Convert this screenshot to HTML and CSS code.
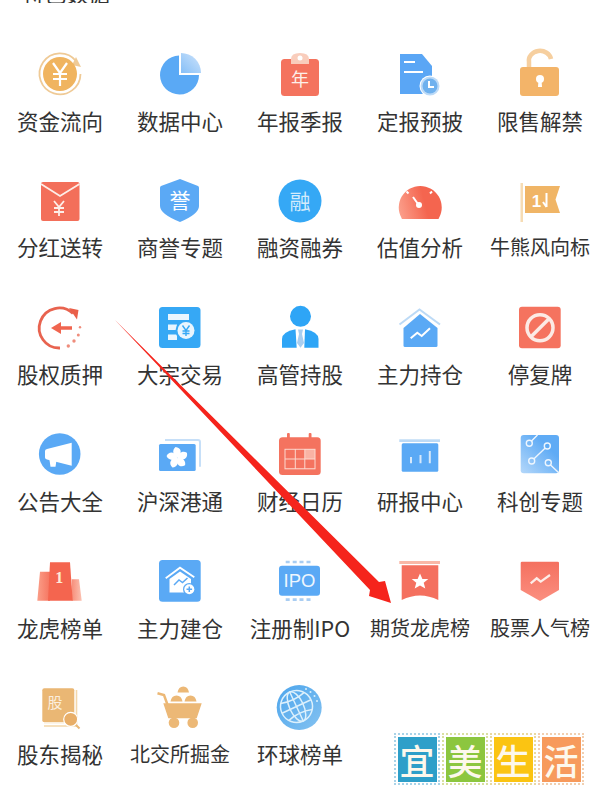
FILE: index.html
```html
<!DOCTYPE html>
<html lang="zh-CN">
<head>
<meta charset="utf-8">
<title>数据中心</title>
<link rel="stylesheet" href="styles.css">
</head>
<body>
<main class="page">
  <div class="title"><span>特色数据</span></div>
  <div class="grid">

    <a class="item"><svg class="icon" viewBox="0 0 64 64">
      <path d="M48 19A20.5 20.5 0 1 0 52.5 32" fill="none" stroke="#efca96" stroke-width="1.8"/>
      <path d="M48 15L53 25L44 23Z" fill="#efca96"/>
      <circle cx="32" cy="32" r="17" fill="#f0b45f"/>
      <path d="M25 21L32 31L39 21M32 31V44M25 32H39M25 37H39" fill="none" stroke="#fff" stroke-width="2.2"/>
    </svg><span class="label">资金流向</span></a>

    <a class="item"><svg class="icon" viewBox="0 0 64 64">
      <defs><linearGradient id="g-pie" x1="0" y1="1" x2="1" y2="0"><stop offset="0" stop-color="#86bff7"/><stop offset="1" stop-color="#cfe4fb"/></linearGradient></defs>
      <path d="M31 13.500A19.500 19.500 0 1 0 51 33H31Z" fill="#5aa9f5"/>
      <path d="M33 11A20 20 0 0 1 53 31H33Z" fill="url(#g-pie)"/>
    </svg><span class="label">数据中心</span></a>

    <a class="item"><svg class="icon" viewBox="0 0 64 64">
      <rect x="13" y="17" width="38" height="37" rx="3.500" fill="#f4735e"/>
      <path d="M23 22V17Q23 11 32 11Q41 11 41 17V22Z" fill="#f9cdbc"/>
      <circle cx="32" cy="16" r="2.500" fill="#fff"/>
      <text class="glyph" x="32" y="44" font-size="18" fill="#fdf0ea" text-anchor="middle">年</text>
    </svg><span class="label">年报季报</span></a>

    <a class="item"><svg class="icon" viewBox="0 0 64 64">
      <path d="M12 12H34L44 24V52H12Z" fill="#5aa6f5"/>
      <path d="M16 20H27M16 30H35" stroke="#fff" stroke-width="2" fill="none"/>
      <circle cx="42" cy="44" r="10.500" fill="#fff"/>
      <circle cx="42" cy="44" r="9.500" fill="#bcdaf7"/>
      <circle cx="42" cy="44" r="7.500" fill="#6fb1ee"/>
      <path d="M41 39V45H46" stroke="#fff" stroke-width="2" fill="none"/>
    </svg><span class="label">定报预披</span></a>

    <a class="item"><svg class="icon" viewBox="0 0 64 64">
      <path d="M21 25V20A11 9.500 0 0 1 43 17" fill="none" stroke="#f6cf9f" stroke-width="4.500"/>
      <rect x="12" y="25" width="39" height="29" rx="3" fill="#f3b469"/>
      <circle cx="32" cy="37" r="4" fill="#fff"/>
      <path d="M30.500 38H33.500L34 45H30Z" fill="#fff"/>
    </svg><span class="label">限售解禁</span></a>

    <a class="item"><svg class="icon" viewBox="0 0 64 64">
      <rect x="13" y="13" width="38.500" height="39" rx="2" fill="#f36f5a"/>
      <path d="M13 15L32 27L51.500 15" fill="none" stroke="#fdeee8" stroke-width="1.800"/>
      <path d="M26 32L31 38L36 32M31 38V47M26 39H36M26 43H36" fill="none" stroke="#fdeee8" stroke-width="1.800"/>
    </svg><span class="label">分红送转</span></a>

    <a class="item"><svg class="icon" viewBox="0 0 64 64">
      <path d="M32 10L50 17Q51 17.500 51 19V37Q51 45 32 53Q12 45 12 37V19Q12 17.500 13 17Z" fill="#5ba9f5"/>
      <text class="glyph" x="32" y="39" font-size="21" fill="#fff" text-anchor="middle">誉</text>
    </svg><span class="label">商誉专题</span></a>

    <a class="item"><svg class="icon" viewBox="0 0 64 64">
      <circle cx="32" cy="32" r="21.500" fill="#35a8f5"/>
      <text class="glyph" x="32" y="39.500" font-size="21" fill="#d3ebfc" text-anchor="middle">融</text>
    </svg><span class="label">融资融券</span></a>

    <a class="item"><svg class="icon" viewBox="0 0 64 64">
      <defs><linearGradient id="g-gauge" x1="0" y1="0.600" x2="1" y2="0.400"><stop offset="0" stop-color="#fb9c88"/><stop offset="0.600" stop-color="#f4654f"/></linearGradient></defs>
      <path d="M13.500 49A21.500 21.500 0 1 1 51 49Q51 50 50 50H14.500Q13.500 50 13.500 49Z" fill="url(#g-gauge)"/>
      <path d="M18.500 22.500L20.500 24.500M44 22.500L42 24.500M25 28L30 35" stroke="#fff" stroke-width="2" fill="none"/>
      <circle cx="31" cy="36" r="3" fill="#fff"/>
    </svg><span class="label">估值分析</span></a>

    <a class="item"><svg class="icon" viewBox="0 0 64 64">
      <rect x="12.500" y="14" width="2.500" height="39" fill="#f6dcb4"/>
      <path d="M17 17H52L47.500 30.500L52 44H17Z" fill="#f0b566"/>
      <text class="latin" x="28.500" y="38" font-size="17" font-weight="700" fill="#fff" text-anchor="middle">1</text>
      <path d="M38.500 24V38M38.500 38L35 33" stroke="#fff" stroke-width="2" fill="none"/>
    </svg><span class="label label-long">牛熊风向标</span></a>

    <a class="item"><svg class="icon" viewBox="0 0 64 64">
      <path d="M45 17.500A20 20 0 1 0 32 52" fill="none" stroke="#e8634f" stroke-width="2.800"/>
      <path d="M41 12L50.500 14L49 23.500Z" fill="#ea5f49"/>
      <circle cx="40.300" cy="50" r="1.700" fill="#ef8d7c"/><circle cx="46" cy="45" r="1.700" fill="#ef8d7c"/>
      <circle cx="50.300" cy="39" r="1.500" fill="#ef8d7c"/><circle cx="52" cy="31.300" r="1.200" fill="#ef8d7c"/>
      <path d="M32 32H44" stroke="#f0654f" stroke-width="3.500"/>
      <path d="M23 32L33 26V38Z" fill="#f0654f"/>
    </svg><span class="label">股权质押</span></a>

    <a class="item"><svg class="icon" viewBox="0 0 64 64">
      <rect x="11" y="11" width="41.500" height="41" rx="3.500" fill="#36a8f5"/>
      <path d="M20 18H41V24H20ZM20 28.500H29V34H20ZM20 38.500H29V44H20Z" fill="#e9f5fe"/>
      <circle cx="38" cy="34.500" r="10.500" fill="#36a8f5"/>
      <circle cx="38" cy="34.500" r="8.500" fill="#e9f5fe"/>
      <path d="M34.500 29.500L38 34.500L41.500 29.500M38 34.500V40M34.500 35H41.500M34.500 37.500H41.500" fill="none" stroke="#36a8f5" stroke-width="1.400"/>
    </svg><span class="label">大宗交易</span></a>

    <a class="item"><svg class="icon" viewBox="0 0 64 64">
      <circle cx="32.500" cy="20.300" r="10.500" fill="#2ea5f6"/>
      <path d="M14 51.700V43Q14 36 27.500 33.300L28.700 51.700Z" fill="#2ea5f6"/>
      <path d="M50.500 51.700V43Q50.500 36 37 33.300L36.300 51.700Z" fill="#2ea5f6"/>
      <path d="M30 33.500H35L34 38L36 47L32.500 51.700L29 47L31 38Z" fill="#a9cef0"/>
    </svg><span class="label">高管持股</span></a>

    <a class="item"><svg class="icon" viewBox="0 0 64 64">
      <path d="M11.500 28.500L31.500 13.500L52 28.500" fill="none" stroke="#bcdaf6" stroke-width="2"/>
      <path d="M32 18L49.500 32V49.500Q49.500 51 48 51H17Q15.500 51 15.500 49.500V32Z" fill="#5aa9f5"/>
      <path d="M22.700 42.300L29.300 36.700L33.700 40L42 32.300" fill="none" stroke="#fff" stroke-width="2"/>
    </svg><span class="label">主力持仓</span></a>

    <a class="item"><svg class="icon" viewBox="0 0 64 64">
      <rect x="11" y="10.700" width="41.700" height="41.600" rx="3" fill="#f5735f"/>
      <circle cx="32" cy="31.700" r="13" fill="none" stroke="#fcebe5" stroke-width="3.500"/>
      <path d="M22.500 41.200L41.500 22.200" stroke="#fcebe5" stroke-width="3.500"/>
    </svg><span class="label">停复牌</span></a>

    <a class="item"><svg class="icon" viewBox="0 0 64 64">
      <circle cx="31.700" cy="32" r="20.800" fill="#5aa9f5"/>
      <path d="M17 29Q17 27.500 19 27L43.700 20.700V43.700L19 37.500Q17 37 17 35.500Z" fill="#fff"/>
      <path d="M21.500 38H28.500L27.500 44.700H22.500Z" fill="#fff"/>
    </svg><span class="label">公告大全</span></a>

    <a class="item"><svg class="icon" viewBox="0 0 64 64">
      <path d="M17 18H50Q52 18 52 20V44.700" fill="none" stroke="#c6dff8" stroke-width="2"/>
      <rect x="11" y="22" width="36.700" height="27" rx="1.500" fill="#5aa9f5"/>
      <g fill="#fff">
        <path d="M29.300 35.700C24.500 33 24 28 27.500 25C33 25.500 35 31 29.300 35.700Z"/>
        <path d="M29.300 35.700C24.500 33 24 28 27.500 25C33 25.500 35 31 29.300 35.700Z" transform="rotate(72 29.300 35.700)"/>
        <path d="M29.300 35.700C24.500 33 24 28 27.500 25C33 25.500 35 31 29.300 35.700Z" transform="rotate(144 29.300 35.700)"/>
        <path d="M29.300 35.700C24.500 33 24 28 27.500 25C33 25.500 35 31 29.300 35.700Z" transform="rotate(216 29.300 35.700)"/>
        <path d="M29.300 35.700C24.500 33 24 28 27.500 25C33 25.500 35 31 29.300 35.700Z" transform="rotate(288 29.300 35.700)"/>
      </g>
    </svg><span class="label">沪深港通</span></a>

    <a class="item"><svg class="icon" viewBox="0 0 64 64">
      <rect x="19" y="11" width="2.800" height="7" rx="1" fill="#f4735f"/><rect x="40.700" y="11" width="2.800" height="7" rx="1" fill="#f4735f"/>
      <rect x="11" y="15.300" width="41.700" height="37.700" rx="3.500" fill="#f4735f"/>
      <rect x="16.500" y="26.800" width="31" height="20.500" fill="#fcd9cf"/>
      <path d="M17.500 27.800H26.800V36.500H17.500ZM27.800 27.800H36.300V36.500H27.800ZM17.500 37.500H26.800V46.300H17.500ZM27.800 37.500H36.300V46.300H27.800ZM37.300 37.500H46.500V46.300H37.300Z" fill="#f4735f"/>
      <rect x="37.300" y="27.800" width="9.200" height="8.700" fill="#f9b3a4"/>
    </svg><span class="label">财经日历</span></a>

    <a class="item"><svg class="icon" viewBox="0 0 64 64">
      <rect x="11.300" y="17.300" width="40.700" height="2.700" fill="#bcdaf6"/>
      <rect x="13.700" y="21.300" width="36.600" height="28.400" rx="1.500" fill="#5aa9f5"/>
      <path d="M23 35V41.300M32.500 33V41.300M41.800 29V41.300" stroke="#d5e8fb" stroke-width="2" fill="none"/>
    </svg><span class="label">研报中心</span></a>

    <a class="item"><svg class="icon" viewBox="0 0 64 64">
      <defs><linearGradient id="g-sci" x1="0" y1="1" x2="1" y2="0"><stop offset="0" stop-color="#b5d8fa"/><stop offset="0.700" stop-color="#5fabf5"/></linearGradient></defs>
      <rect x="12.700" y="13" width="38.300" height="38.300" rx="3" fill="url(#g-sci)"/>
      <g fill="none" stroke="#eef6fe" stroke-width="1.400">
        <circle cx="21.300" cy="21.300" r="3"/><circle cx="39.300" cy="24" r="3"/><circle cx="23.700" cy="39" r="3"/><circle cx="40.300" cy="40.700" r="3"/>
        <path d="M23.500 19L29.500 13M37 26.200L26 36.800M42.500 43L51 51"/>
      </g>
    </svg><span class="label">科创专题</span></a>

    <a class="item"><svg class="icon" viewBox="0 0 64 64">
      <defs>
        <linearGradient id="g-podl" x1="0" y1="0" x2="1" y2="0"><stop offset="0" stop-color="#fb9e88"/><stop offset="1" stop-color="#f57560"/></linearGradient>
        <linearGradient id="g-podr" x1="0" y1="0" x2="1" y2="0"><stop offset="0" stop-color="#f78e7a"/><stop offset="1" stop-color="#fbc2b2"/></linearGradient>
      </defs>
      <path d="M12 22.700H22V51.700H9.300Z" fill="url(#g-podl)"/>
      <path d="M43.700 30.300H51L53.700 51.700H43.700Z" fill="url(#g-podr)"/>
      <path d="M22 13.300H42L44.700 51.700H20Z" fill="#f4654f"/>
      <text class="serif" x="31.300" y="34" font-size="16" font-weight="700" fill="#fdebd8" text-anchor="middle">1</text>
    </svg><span class="label">龙虎榜单</span></a>

    <a class="item"><svg class="icon" viewBox="0 0 64 64">
      <rect x="11" y="11" width="41.700" height="41.700" rx="3.500" fill="#5aa9f5"/>
      <path d="M17.700 29.300L32 18.700L46.300 28.300" fill="none" stroke="#fff" stroke-width="1.800"/>
      <path d="M32 22.500L43 30V43.500H21.500V30Z" fill="#fff"/>
      <path d="M26 36L31 31L34.500 33.500L39.500 29" fill="none" stroke="#5aa9f5" stroke-width="1.500"/>
      <circle cx="41.300" cy="40.300" r="6.300" fill="#5aa9f5"/>
      <circle cx="41.300" cy="40.300" r="5" fill="#fff"/>
      <path d="M38.500 40.300H44.100M41.300 37.500V43.100" stroke="#5aa9f5" stroke-width="1.500"/>
    </svg><span class="label">主力建仓</span></a>

    <a class="item"><svg class="icon" viewBox="0 0 64 64">
      <path d="M17.700 11.700H21.700V14.300H17.700ZM24.700 11.700H28.700V14.300H24.700ZM31.500 11.700H35.500V14.300H31.500ZM38.500 11.700H42.500V14.300H38.500ZM17.700 49.300H21.700V52H17.700ZM24.700 49.300H28.700V52H24.700ZM31.500 49.300H35.500V52H31.500ZM38.500 49.300H42.500V52H38.500Z" fill="#a9cdf2"/>
      <rect x="11" y="16.700" width="41" height="30" rx="3" fill="#5aa9f5"/>
      <text class="latin" x="31.500" y="38" font-size="18.500" fill="#eef6fe" text-anchor="middle">IPO</text>
    </svg><span class="label">注册制IPO</span></a>

    <a class="item"><svg class="icon" viewBox="0 0 64 64">
      <rect x="11.300" y="12" width="40.700" height="3" fill="#f9b8a7"/>
      <path d="M13.700 16.200H50.300V51Q32 42 13.700 51Z" fill="#f4705f"/>
      <path d="M32 24.500L34.400 30H40.300L35.700 33.800L37.300 39.500L32 36.400L26.700 39.500L28.300 33.800L23.700 30H29.600Z" fill="#fff"/>
    </svg><span class="label label-long">期货龙虎榜</span></a>

    <a class="item"><svg class="icon" viewBox="0 0 64 64">
      <defs><linearGradient id="g-pop" x1="0" y1="0" x2="0" y2="1"><stop offset="0" stop-color="#f4705f"/><stop offset="1" stop-color="#fb8f80"/></linearGradient></defs>
      <path d="M14 12.700H49.700Q51 12.700 51 14V41L32 52L12.700 41V14Q12.700 12.700 14 12.700Z" fill="url(#g-pop)"/>
      <path d="M22.700 34.300L28.700 29.300L32.700 32.700L42 26" fill="none" stroke="#fdeee9" stroke-width="2.200"/>
    </svg><span class="label label-long">股票人气榜</span></a>

    <a class="item"><svg class="icon" viewBox="0 0 64 64">
      <rect x="14.300" y="12.300" width="32" height="34" rx="2" fill="#eab774"/>
      <path d="M48.500 14V50H16M15 46.500" fill="none" stroke="#f3d7ab" stroke-width="1.600"/>
      <path d="M16 47H36" stroke="#fbeedd" stroke-width="1.200"/>
      <text class="glyph" x="27" y="31.500" font-size="15" fill="#fbeedd" text-anchor="middle">股</text>
      <path d="M46 47L51.500 52.500" stroke="#e9b877" stroke-width="2"/>
      <circle cx="42.700" cy="43.300" r="7" fill="#e8ae68" stroke="#fff" stroke-width="1.200"/>
    </svg><span class="label">股东揭秘</span></a>

    <a class="item"><svg class="icon" viewBox="0 0 64 64">
      <path d="M9.500 17.300L16 19L24 41" fill="none" stroke="#ecb876" stroke-width="2.500"/>
      <path d="M15.300 27.300H53.700L48.700 42.300H20.300Z" fill="#ecb876"/>
      <circle cx="26" cy="46.700" r="5.300" fill="#ecb876"/><circle cx="44.700" cy="46.700" r="5.300" fill="#ecb876"/>
      <path d="M29.500 16.500Q30.500 10.500 35.300 10.500Q40 10.500 41 16.500ZM22.500 25.500Q23.500 19.500 28.500 19.500Q33.500 19.500 34.500 25.500ZM36.500 25.500Q37.500 19.500 42.500 19.500Q47.500 19.500 48.500 25.500Z" fill="#ecb876"/>
    </svg><span class="label label-long">北交所掘金</span></a>

    <a class="item"><svg class="icon" viewBox="0 0 64 64">
      <defs><linearGradient id="g-globe" x1="0" y1="0" x2="1" y2="1"><stop offset="0" stop-color="#4ca5ec"/><stop offset="1" stop-color="#84c2f1"/></linearGradient></defs>
      <circle cx="31.200" cy="31.500" r="22.500" fill="url(#g-globe)"/>
      <g transform="rotate(-25 28.500 30.500)" fill="none" stroke="#dcf0fc" stroke-width="1.500">
        <circle cx="28.500" cy="30.500" r="16"/>
        <ellipse cx="28.500" cy="30.500" rx="7" ry="16"/>
        <path d="M28.500 14.500V46.500M12.500 30.500H44.500M15.500 21Q28.500 25 41.500 21M15.500 40Q28.500 36 41.500 40"/>
      </g>
      <g fill="#dcf0fc"><circle cx="38" cy="13" r="1"/><circle cx="42.500" cy="16" r="1"/><circle cx="46.500" cy="20" r="1"/><circle cx="49" cy="25" r="1"/></g>
    </svg><span class="label">环球榜单</span></a>

  </div>

  <svg class="arrow" viewBox="0 0 600 800">
    <path d="M115 320L379 582L385 581L391 603L369 596L370 590Z" fill="#f5241c"/>
  </svg>

  <div class="stamp">
    <span class="tile tile-blue">宜</span>
    <span class="tile tile-green">美</span>
    <span class="tile tile-yellow">生</span>
    <span class="tile tile-orange">活</span>
  </div>
</main>
</body>
</html>
```

FILE: styles.css
```css
* {
  box-sizing: border-box;
}

body {
  margin: 0;
  background: #fff;
}

.page {
  position: relative;
  width: 600px;
  height: 800px;
  overflow: hidden;
  background: #fff;
  font-family: "Noto Sans CJK SC", "Noto Sans", sans-serif;
  color: #333;
}

.title {
  display: flex;
  align-items: flex-end;
  height: 3px;
  padding-left: 22px;
  overflow: hidden;
  font-size: 22px;
  line-height: 22px;
}

.grid {
  display: grid;
  grid-template-columns: repeat(5, 120px);
  grid-auto-rows: 126.8px;
  padding-top: 39px;
}

.item {
  display: flex;
  flex-direction: column;
  align-items: center;
}

.icon {
  display: block;
  width: 64px;
  height: 64px;
}

.label {
  margin-top: -0.5px;
  font-size: 21.5px;
  line-height: 30px;
  white-space: nowrap;
  color: #333;
}

.label-long {
  font-size: 20px;
}

.glyph {
  font-family: "Noto Sans CJK SC", sans-serif;
}

.latin {
  font-family: "Liberation Sans", sans-serif;
}

.serif {
  font-family: "Liberation Serif", serif;
}

.arrow {
  position: absolute;
  top: 0;
  left: 0;
  width: 600px;
  height: 800px;
  pointer-events: none;
}

.stamp {
  position: absolute;
  top: 733px;
  left: 394px;
  display: flex;
  gap: 2px;
}

.tile {
  display: flex;
  align-items: center;
  justify-content: center;
  width: 46px;
  height: 52px;
  padding: 1.5px;
  border: 2px dotted #a9d3e8;
  background-clip: content-box;
  font-size: 35px;
  font-weight: 500;
  line-height: 1;
  color: #fdf8ec;
}

.tile-blue {
  background-color: #2e9fc9;
}

.tile-green {
  background-color: #8cc63f;
  border-color: #d9dfa0;
}

.tile-yellow {
  background-color: #fbc412;
  border-color: #e9d9a0;
}

.tile-orange {
  background-color: #f79a5c;
  border-color: #f1cfb0;
}
```
